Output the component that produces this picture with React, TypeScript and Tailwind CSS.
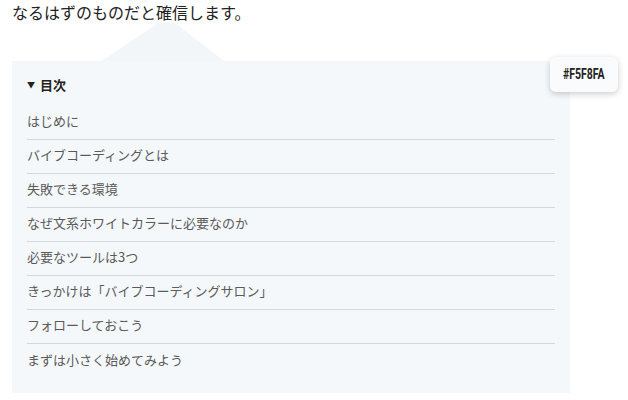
import React from 'react';

const items = [
  'はじめに',
  'バイブコーディングとは',
  '失敗できる環境',
  'なぜ文系ホワイトカラーに必要なのか',
  '必要なツールは3つ',
  'きっかけは「バイブコーディングサロン」',
  'フォローしておこう',
  'まずは小さく始めてみよう',
];

const jp = { fontFamily: '"Noto Sans CJK JP", "Noto Sans", sans-serif' };

const App: React.FC = () => {
  return (
    <div className="w-[628px] h-[400px] bg-white relative overflow-hidden" style={jp}>
      <p className="pl-[12px] text-[16px] leading-[24px] text-[#222]">
        なるはずのものだと確信します。
      </p>

      <div className="h-[37px] pl-[102px] flex items-end">
        <svg width="122" height="38" viewBox="0 0 122 38" className="block">
          <polygon points="56,0 73,0 122,38 0,38" fill="#F3F6F9" />
        </svg>
      </div>

      <div className="ml-[12px] w-[558px] bg-[#F5F8FA] pt-[14px] px-[15px] pb-[15px]">
        <div className="flex items-center gap-[5px] h-[20px] text-[13px] font-bold text-[#222]">
          <span className="text-[8px] leading-none">▼</span>
          <span>目次</span>
        </div>
        <ul className="mt-[11px]">
          {items.map((item, i) => (
            <li
              key={item}
              className={
                'h-[34px] flex items-center pb-[3px] text-[13px] text-[#5a5a5a] ' +
                (i < items.length - 1 ? 'border-b border-[#d3d8dc]' : '')
              }
            >
              {item}
            </li>
          ))}
        </ul>
      </div>

      <div className="absolute left-[550px] top-[57px] w-[68px] h-[35px] rounded-[6px] bg-[#fafbfc] shadow-[0_2px_6px_rgba(0,0,0,0.2)] flex items-center justify-center">
        <span
          className="text-[14px] font-bold text-[#222] scale-x-[0.75] whitespace-nowrap"
          style={{ fontFamily: 'Roboto, "Liberation Sans", sans-serif' }}
        >
          #F5F8FA
        </span>
      </div>
    </div>
  );
};

export default App;
